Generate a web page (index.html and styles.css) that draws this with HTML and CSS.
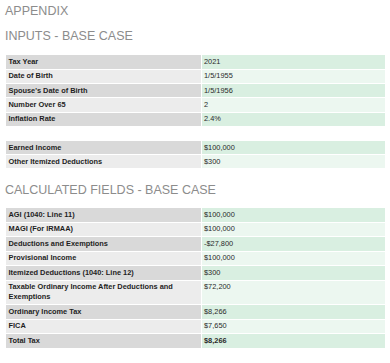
FILE: index.html
```html
<!DOCTYPE html>
<html>
<head>
<meta charset="utf-8">
<link rel="stylesheet" href="styles.css">
</head>
<body>
<div class="page">
  <h1 class="title">APPENDIX</h1>
  <h2 class="section first">INPUTS - BASE CASE</h2>
  <table class="grid">
    <tr><td class="lbl">Tax Year</td><td class="val">2021</td></tr>
    <tr><td class="lbl">Date of Birth</td><td class="val">1/5/1955</td></tr>
    <tr><td class="lbl">Spouse's Date of Birth</td><td class="val">1/5/1956</td></tr>
    <tr><td class="lbl">Number Over 65</td><td class="val">2</td></tr>
    <tr><td class="lbl">Inflation Rate</td><td class="val">2.4%</td></tr>
  </table>
  <table class="grid second">
    <tr><td class="lbl">Earned Income</td><td class="val">$100,000</td></tr>
    <tr><td class="lbl">Other Itemized Deductions</td><td class="val">$300</td></tr>
  </table>
  <h2 class="section">CALCULATED FIELDS - BASE CASE</h2>
  <table class="grid calc">
    <tr><td class="lbl">AGI (1040: Line 11)</td><td class="val">$100,000</td></tr>
    <tr><td class="lbl">MAGI (For IRMAA)</td><td class="val">$100,000</td></tr>
    <tr><td class="lbl">Deductions and Exemptions</td><td class="val">-$27,800</td></tr>
    <tr><td class="lbl">Provisional Income</td><td class="val">$100,000</td></tr>
    <tr><td class="lbl">Itemized Deductions (1040: Line 12)</td><td class="val">$300</td></tr>
    <tr><td class="lbl">Taxable Ordinary Income After Deductions and Exemptions</td><td class="val">$72,200</td></tr>
    <tr><td class="lbl">Ordinary Income Tax</td><td class="val">$8,266</td></tr>
    <tr><td class="lbl">FICA</td><td class="val">$7,650</td></tr>
    <tr><td class="lbl">Total Tax</td><td class="val strong">$8,266</td></tr>
  </table>
</div>
</body>
</html>
```

FILE: styles.css
```css
html, body {
  margin: 0;
  padding: 0;
  background: #ffffff;
}
.page {
  padding: 4.4px 5px 0 5px;
  font-family: "Liberation Sans", Arial, sans-serif;
}
.title, .section {
  margin: 0;
  font-size: 12.5px;
  line-height: 14px;
  font-weight: normal;
  color: #8c8c8c;
}
.section.first {
  margin-top: 11px;
}
.section {
  margin-top: 13.3px;
}
.grid {
  width: 379px;
  margin: 12.6px 0 0 1px;
  border-collapse: separate;
  border-spacing: 0;
  table-layout: fixed;
  font-size: 7.4px;
  line-height: 9.8px;
}
.grid.second {
  margin-top: 14px;
}
.section + .grid {
  margin-top: 11.3px;
}
.section.first + .grid {
  margin-top: 12px;
}
.grid td {
  vertical-align: top;
  padding: 1.75px 2.5px;
  border-bottom: 1px solid #ffffff;
}
.grid.calc {
  line-height: 10px;
}
.lbl {
  width: 50%;
  font-weight: bold;
  color: #1e1e1e;
  background: #ececec;
  border-right: 1px solid #ffffff;
}
.val {
  color: #2a2a2a;
  background: #ecf7f0;
}
.grid tr:nth-child(odd) .lbl {
  background: #d9d9d9;
}
.grid tr:nth-child(odd) .val {
  background: #d9efe1;
}
.strong {
  font-weight: bold;
}
```
